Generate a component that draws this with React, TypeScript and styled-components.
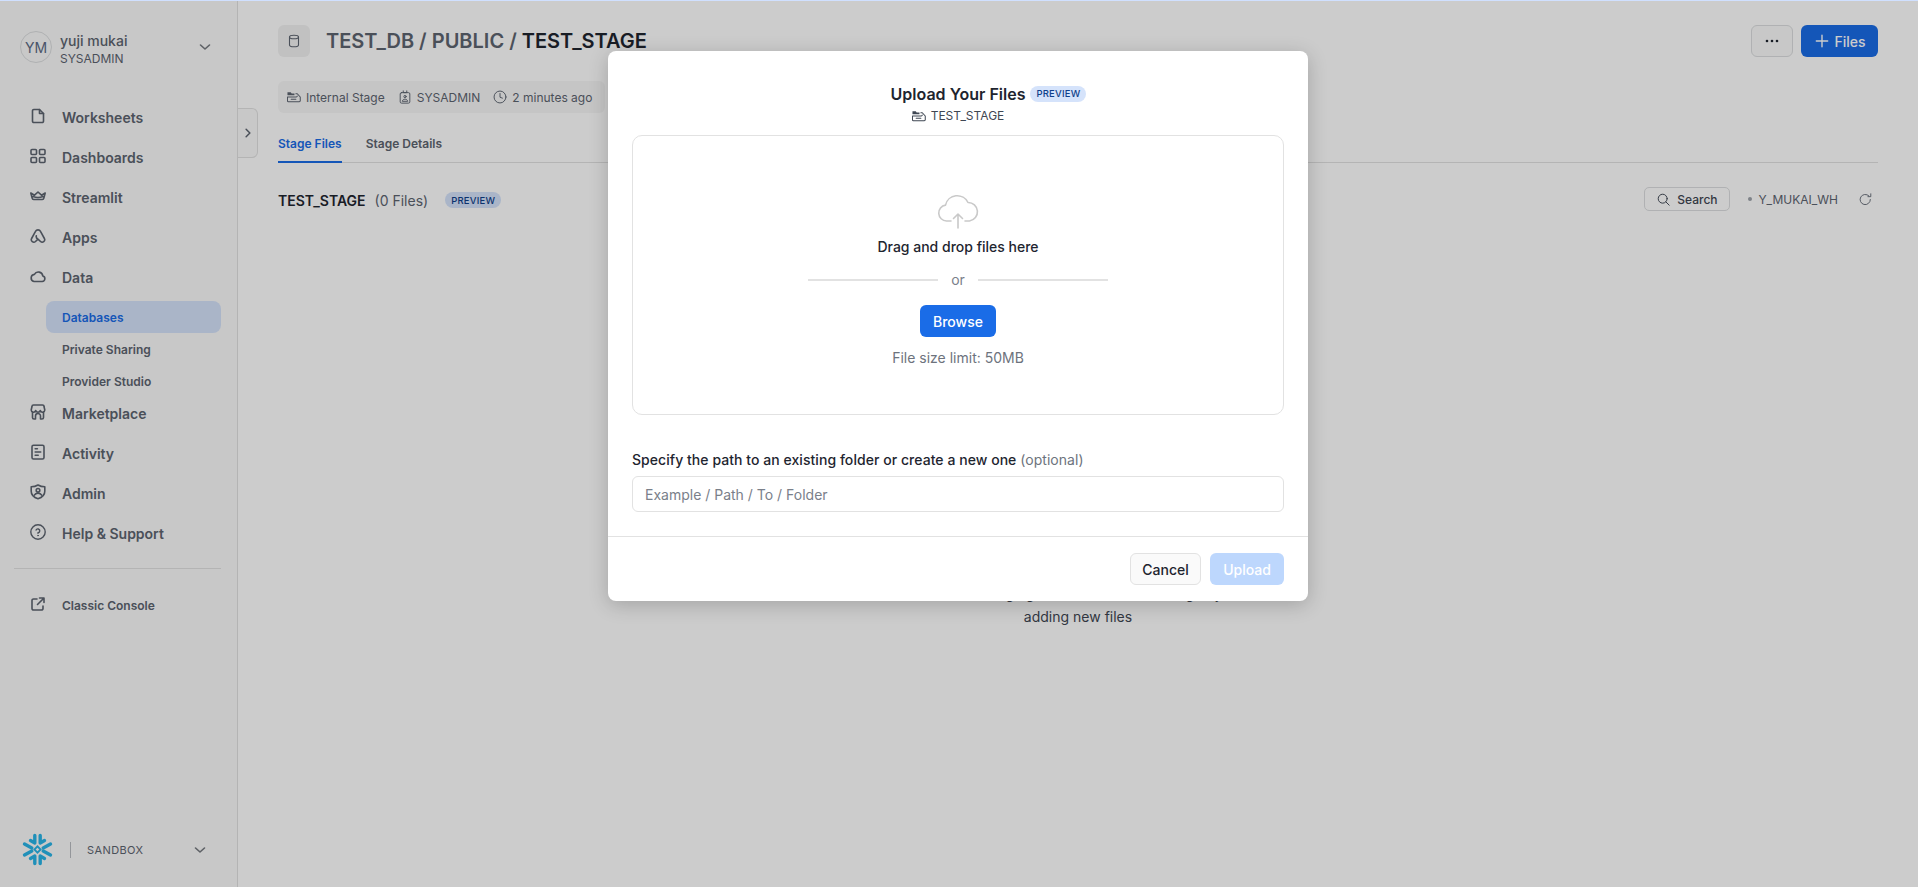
import React from 'react';
import styled, { createGlobalStyle } from 'styled-components';

const GlobalStyle = createGlobalStyle`
  html, body {
    margin: 0;
    padding: 0;
    height: 100%;
    overflow: hidden;
    background: #fff;
    font-family: Inter, "Liberation Sans", sans-serif;
  }
  * { box-sizing: border-box; }
`;

const Page = styled.div`
  position: relative;
  display: flex;
  width: 1918px;
  height: 887px;
  overflow: hidden;
  border-top: 1px solid #d0e0ff;
  color: #1e252f;
`;

const Sidebar = styled.aside`
  display: flex;
  flex-direction: column;
  flex: 0 0 238px;
  height: 100%;
  padding: 0 16px 0 14px;
  background: #fafafa;
  border-right: 1px solid #e2e2e2;
`;

const UserRow = styled.div`
  display: flex;
  align-items: center;
  gap: 8px;
  height: 32px;
  margin: 30px 8px 0 6px;
`;

const Avatar = styled.div`
  display: flex;
  align-items: center;
  justify-content: center;
  flex: 0 0 32px;
  height: 32px;
  border: 1px solid #dcdee0;
  border-radius: 50%;
  font-size: 14px;
  color: #5d6a85;
`;

const UserText = styled.div`
  flex: 1;
  margin-top: 4px;
`;

const UserName = styled.div`
  font-size: 14px;
  font-weight: 500;
  line-height: 17px;
  color: #5d6470;
`;

const UserRole = styled.div`
  font-size: 12px;
  line-height: 16px;
  margin-top: 2px;
  color: #5d6470;
`;

const NavList = styled.nav`
  display: flex;
  flex-direction: column;
  margin-top: 34px;
`;

const NavItem = styled.div`
  display: flex;
  align-items: center;
  gap: 16px;
  height: 40px;
  padding-left: 16px;
  font-size: 14px;
  font-weight: 600;
  color: #5d6470;

  svg {
    margin-top: -2px;
  }
`;

const SubList = styled.div`
  display: flex;
  flex-direction: column;
  padding: 4px 0 0 32px;
  margin-bottom: -4px;
`;

const SubItem = styled.div<{ $active?: boolean }>`
  display: flex;
  align-items: center;
  height: 32px;
  padding-left: 16px;
  border-radius: 8px;
  font-size: 12px;
  font-weight: 600;
  color: ${p => (p.$active ? '#1a6ce7' : '#5d6470')};
  background: ${p => (p.$active ? '#d5e3fb' : 'transparent')};
`;

const Divider = styled.div`
  height: 1px;
  margin: 15px 0 16px;
  background: #e2e2e2;
`;

const ConsoleLink = styled(NavItem)`
  font-size: 12px;
`;

const SidebarFooter = styled.div`
  display: flex;
  align-items: center;
  margin: auto 13px 21px 0;
  padding-left: 8px;
`;

const FooterRule = styled.div`
  width: 1px;
  height: 16px;
  margin: 0 16px;
  background: #b9bcc1;
`;

const FooterLabel = styled.div`
  flex: 1;
  font-size: 11px;
  letter-spacing: 0.4px;
  color: #5d6470;
`;

const Collapse = styled.div`
  position: absolute;
  top: 107px;
  left: 238px;
  display: flex;
  align-items: center;
  justify-content: center;
  width: 20px;
  height: 50px;
  border: 1px solid #e2e2e2;
  border-left: 0;
  border-radius: 0 6px 6px 0;
  background: #fafafa;
  color: #5d6470;
`;

const Main = styled.main`
  display: flex;
  flex-direction: column;
  flex: 1;
  padding: 24px 40px 0;
  min-width: 0;
`;

const HeaderRow = styled.div`
  display: flex;
  align-items: center;
  height: 32px;
`;

const DbIcon = styled.div`
  display: flex;
  align-items: center;
  justify-content: center;
  width: 32px;
  height: 32px;
  margin-right: 16px;
  border-radius: 6px;
  background: #f2f2f2;
  color: #5d6470;
`;

const Crumbs = styled.div`
  flex: 1;
  font-size: 20px;
  font-weight: 600;
  color: #5d6470;
`;

const CrumbLast = styled.span`
  color: #1e252f;
`;

const MoreButton = styled.button`
  display: flex;
  align-items: center;
  justify-content: center;
  width: 42px;
  height: 32px;
  margin-right: 8px;
  padding: 0;
  border: 1px solid #dcdee0;
  border-radius: 6px;
  background: #fafafa;
  color: #1e252f;
`;

const PrimaryButton = styled.button`
  display: flex;
  align-items: center;
  justify-content: center;
  gap: 5px;
  width: 77px;
  height: 32px;
  padding: 0 0 0 2px;
  border: 0;
  border-radius: 6px;
  background: #1a6ce7;
  color: #fff;
  font-family: inherit;
  font-size: 14px;
  font-weight: 500;
`;

const MetaRow = styled.div`
  display: flex;
  align-items: center;
  align-self: flex-start;
  gap: 13px;
  height: 32px;
  margin-top: 24px;
  padding: 0 13px 0 9px;
  border-radius: 6px;
  background: #f7f7f7;
  font-size: 12px;
  color: #5d6470;
`;

const MetaItem = styled.div`
  display: flex;
  align-items: center;
  gap: 5px;
`;

const Tabs = styled.div`
  display: flex;
  gap: 24px;
  margin-top: 15px;
  border-bottom: 1px solid #e2e2e2;
`;

const Tab = styled.div<{ $active?: boolean }>`
  height: 35px;
  padding-top: 7px;
  margin-bottom: -1px;
  font-size: 12px;
  font-weight: 600;
  line-height: 17px;
  color: ${p => (p.$active ? '#1a6ce7' : '#5d6470')};
  border-bottom: 2px solid ${p => (p.$active ? '#1a6ce7' : 'transparent')};
`;

const SectionRow = styled.div`
  display: flex;
  align-items: center;
  height: 24px;
  margin-top: 25px;
`;

const SectionTitle = styled.div`
  font-size: 14px;
  font-weight: 600;
  color: #1e252f;
`;

const SectionCount = styled.div`
  margin-left: 9px;
  font-size: 14px;
  color: #5d6470;
`;

const Badge = styled.span`
  display: inline-flex;
  align-items: center;
  height: 16px;
  padding: 0 6px;
  border-radius: 8px;
  background: #d5e3fb;
  color: #0f3f8a;
  font-size: 9.5px;
  font-weight: 500;
  letter-spacing: 0.2px;
`;

const SectionBadge = styled(Badge)`
  margin-left: 17px;
`;

const TitleBadge = styled(Badge)`
  position: absolute;
  top: 2px;
  left: 100%;
  margin-left: 5px;
`;

const SectionTools = styled.div`
  display: flex;
  align-items: center;
  margin: -2px 0 0 auto;
  padding-right: 6px;
`;

const SearchBox = styled.div`
  display: flex;
  align-items: center;
  justify-content: center;
  gap: 7px;
  width: 86px;
  height: 24px;
  border: 1px solid #dcdee0;
  border-radius: 5px;
  font-size: 12px;
  font-weight: 500;
  color: #3f4753;
`;

const WarehouseDot = styled.span`
  width: 4px;
  height: 4px;
  margin: 0 6px 0 18px;
  border-radius: 50%;
  background: #9ea3ab;
`;

const WarehouseName = styled.div`
  margin-right: 21px;
  font-size: 12px;
  color: #5d6470;
`;

const RefreshIcon = styled.span`
  display: flex;
  color: #5d6470;
`;

const EmptyNote = styled.div`
  width: 340px;
  margin: 370px 0 0 630px;
  font-size: 14px;
  line-height: 23px;
  text-align: center;
  color: #3f4753;
`;

const Overlay = styled.div`
  position: absolute;
  inset: -1px 0 0 0;
  display: flex;
  justify-content: center;
  padding-right: 2px;
  background: rgba(0, 0, 0, 0.2);
`;

const Modal = styled.div`
  display: flex;
  flex-direction: column;
  width: 700px;
  height: 550px;
  margin-top: 51px;
  border-radius: 8px;
  background: #fff;
  box-shadow: 0 4px 20px rgba(0, 0, 0, 0.2);
`;

const ModalHead = styled.div`
  display: flex;
  flex-direction: column;
  align-items: center;
  height: 84px;
  padding-top: 33px;
`;

const ModalTitleRow = styled.div`
  position: relative;
  font-size: 16px;
  font-weight: 600;
  line-height: 20px;
  color: #1e252f;
`;

const ModalSub = styled.div`
  display: flex;
  align-items: center;
  gap: 5px;
  margin-top: 3px;
  font-size: 12px;
  line-height: 17px;
  color: #3f4753;
`;

const DropZone = styled.div`
  display: flex;
  flex-direction: column;
  align-items: center;
  height: 280px;
  margin: 0 24px;
  padding-top: 56px;
  border: 1px solid #e2e2e2;
  border-radius: 10px;
`;

const DropTitle = styled.div`
  margin-top: 8px;
  font-size: 14px;
  font-weight: 500;
  line-height: 20px;
  color: #1e252f;
`;

const OrRow = styled.div`
  display: flex;
  align-items: center;
  gap: 13px;
  width: 300px;
  margin-top: 13px;
  font-size: 14px;
  line-height: 20px;
  color: #7a808a;
`;

const OrLine = styled.div`
  flex: 1;
  height: 2px;
  background: #e2e2e2;
`;

const BrowseButton = styled.button`
  width: 76px;
  height: 32px;
  margin-top: 15px;
  padding: 0;
  border: 0;
  border-radius: 6px;
  background: #1a6ce7;
  color: #fff;
  font-family: inherit;
  font-size: 14px;
  font-weight: 500;
`;

const LimitNote = styled.div`
  margin-top: 11px;
  font-size: 14px;
  line-height: 20px;
  color: #6d737d;
`;

const PathBlock = styled.div`
  display: flex;
  flex-direction: column;
  margin: 35px 24px 0;
`;

const PathLabel = styled.div`
  font-size: 14px;
  font-weight: 500;
  line-height: 20px;
  letter-spacing: 0.05px;
  color: #1e252f;
`;

const Optional = styled.span`
  font-weight: 400;
  color: #6d737d;
`;

const PathInput = styled.input`
  height: 36px;
  margin-top: 6px;
  padding: 0 12px;
  border: 1px solid #e2e2e2;
  border-radius: 6px;
  font-family: inherit;
  font-size: 14px;
  outline: none;

  &::placeholder {
    color: #7a808a;
    opacity: 1;
  }
`;

const ModalFoot = styled.div`
  display: flex;
  align-items: center;
  justify-content: flex-end;
  gap: 9px;
  height: 65px;
  margin-top: auto;
  padding: 0 24px;
  border-top: 1px solid #e2e2e2;
`;

const CancelButton = styled.button`
  width: 71px;
  height: 32px;
  padding: 0;
  border: 1px solid #e2e2e2;
  border-radius: 6px;
  background: #fafafa;
  color: #1e252f;
  font-family: inherit;
  font-size: 14px;
  font-weight: 500;
`;

const UploadButton = styled.button`
  width: 74px;
  height: 32px;
  padding: 0;
  border: 0;
  border-radius: 6px;
  background: #bdd7fd;
  color: #fff;
  font-family: inherit;
  font-size: 14px;
  font-weight: 500;
`;

type IconProps = { size?: number; weight?: number; children: React.ReactNode };

const Icon = ({ size = 16, weight = 1.6, children }: IconProps) => (
  <svg
    width={size}
    height={size}
    viewBox="0 0 16 16"
    fill="none"
    stroke="currentColor"
    strokeWidth={weight}
    strokeLinecap="round"
    strokeLinejoin="round"
    style={{ flex: 'none' }}
  >
    {children}
  </svg>
);

const Chevron = ({ dir = 'down' }: { dir?: 'down' | 'right' }) => (
  <Icon size={dir === 'down' ? 16 : 12}>
    {dir === 'down' ? <path d="M3.5 6l4.500 4 4.500-4" opacity="0.6" /> : <path d="M5.500 3l5 5-5 5" strokeWidth="2" />}
  </Icon>
);

const StageIcon = () => (
  <svg width="14" height="12" viewBox="0 0 15 12" fill="none" style={{ flex: 'none' }}>
    <path d="M.5 .8h3.500l1 1.400H8v2H.5z" fill="currentColor" />
    <path
      d="M9.500 2.500h1.500l3.200 3.500v4a1 1 0 0 1-1 1H1.500a1 1 0 0 1-1-1V6h9.500a1 1 0 0 0 1-1M4.500 8.500h5"
      stroke="currentColor"
      strokeWidth="1.100"
      strokeLinecap="round"
      strokeLinejoin="round"
    />
  </svg>
);

const Snowflake = () => (
  <svg width="32" height="33" viewBox="0 0 32 33" fill="none" stroke="#29b5e8" style={{ flex: 'none' }}>
    <g strokeWidth="3.400" strokeLinecap="round" strokeLinejoin="round">
      <path d="M12.800 2.500v7.500L8.500 7.500" />
      <path d="M18.200 2.500v7.500l4.300-2.500" />
      <path d="M12.800 30.500V23l-4.300 2.500" />
      <path d="M18.200 30.500V23l4.300 2.500" />
      <path d="M2.500 11l7.300 4" />
      <path d="M2.500 22l7.300-4" />
      <path d="M28.500 11l-7.300 4" />
      <path d="M28.500 22l-7.300-4" />
    </g>
    <rect x="13.300" y="14.300" width="4.400" height="4.400" transform="rotate(45 15.500 16.500)" strokeWidth="1.800" />
  </svg>
);

const navTop = [
  {
    label: 'Worksheets',
    icon: <><path d="M9.500 1.500H3.800a1.300 1.300 0 0 0-1.300 1.300v10.400a1.300 1.300 0 0 0 1.300 1.300h8.400a1.300 1.300 0 0 0 1.300-1.300V5.500z" /><path d="M9.500 1.500v4h4" /></>,
  },
  {
    label: 'Dashboards',
    icon: <><rect x="1" y="1.500" width="5.500" height="5" rx="1" /><rect x="9.500" y="1.500" width="5.500" height="5" rx="1" /><rect x="1" y="9.500" width="5.500" height="5" rx="1" /><rect x="9.500" y="9.500" width="5.500" height="5" rx="1" /></>,
  },
  {
    label: 'Streamlit',
    icon: <path d="M.8 5l3.700 2.200L8 4l3.500 3.200L15.200 5l-1.400 5.200a1.500 1.500 0 0 1-1.500 1.300H3.700a1.500 1.500 0 0 1-1.500-1.300zM3 8.500c3 1.200 7 1.200 10 0" />,
  },
  {
    label: 'Apps',
    icon: <path d="M5.500 3.400L1.600 10.500a2.500 2.500 0 0 0 3.900 3L8 11.200l2.500 2.300a2.500 2.500 0 0 0 3.900-3L10.500 3.400a2.800 2.800 0 0 0-5 0zM8 11.200a3 3 0 0 1-1.700-3.400" />,
  },
  {
    label: 'Data',
    icon: <path d="M4 13.500h8.200a2.800 2.800 0 0 0 .6-5.500A4.500 4.500 0 0 0 4.400 6.400 3.600 3.600 0 0 0 4 13.500z" />,
  },
];

const navBottom = [
  {
    label: 'Marketplace',
    icon: <><path d="M3.500 1h9A1.500 1.500 0 0 1 14 2.500l.8 3.500a2.300 2.300 0 0 1-4.500.6 2.400 2.400 0 0 1-4.600 0A2.300 2.300 0 0 1 1.200 6L2 2.500A1.500 1.500 0 0 1 3.500 1z" /><path d="M2.500 8v5.500A1.500 1.500 0 0 0 4 15h1.500v-3a2.500 2.500 0 0 1 5 0v3H12a1.500 1.500 0 0 0 1.500-1.500V8" /></>,
  },
  {
    label: 'Activity',
    icon: <><rect x="2" y="1.200" width="12" height="13.800" rx="1.500" /><path d="M5.200 4.800h2.200M5.200 8h5.500M5.200 11.200h3" /></>,
  },
  {
    label: 'Admin',
    icon: <><path d="M8 1c2 1.200 4.200 1.800 6.800 1.800v4.500c0 3.700-2.800 6.300-6.800 7.500-4-1.200-6.800-3.800-6.800-7.500V2.800C3.800 2.800 6 2.200 8 1z" /><circle cx="8" cy="6.300" r="1.800" /><path d="M4.300 11.200c.8-1.500 2.100-2.100 3.700-2.100s2.900.6 3.700 2.100" /></>,
  },
  {
    label: 'Help & Support',
    icon: <><circle cx="8" cy="8" r="7.200" strokeWidth="1.400" /><path d="M6.100 6.100A1.900 1.900 0 1 1 8 8.700v.6" strokeWidth="1.400" /><circle cx="8" cy="11.600" r=".4" strokeWidth="1" /></>,
  },
];

const App = () => {
  return (
    <>
      <GlobalStyle />
      <Page>
        <Sidebar>
          <UserRow>
            <Avatar>YM</Avatar>
            <UserText>
              <UserName>yuji mukai</UserName>
              <UserRole>SYSADMIN</UserRole>
            </UserText>
            <Chevron />
          </UserRow>
          <NavList>
            {navTop.map(item => (
              <NavItem key={item.label}>
                <Icon>{item.icon}</Icon>
                {item.label}
              </NavItem>
            ))}
            <SubList>
              <SubItem $active>Databases</SubItem>
              <SubItem>Private Sharing</SubItem>
              <SubItem>Provider Studio</SubItem>
            </SubList>
            {navBottom.map(item => (
              <NavItem key={item.label}>
                <Icon>{item.icon}</Icon>
                {item.label}
              </NavItem>
            ))}
          </NavList>
          <Divider />
          <ConsoleLink>
            <Icon>
              <path d="M7 3H3.500A1.500 1.500 0 0 0 2 4.500v8A1.500 1.500 0 0 0 3.500 14h8a1.500 1.500 0 0 0 1.500-1.500V10" />
              <path d="M7.500 8.500L13.500 2.500M9.500 2h4.500v4.500" />
            </Icon>
            Classic Console
          </ConsoleLink>
          <SidebarFooter>
            <Snowflake />
            <FooterRule />
            <FooterLabel>SANDBOX</FooterLabel>
            <Chevron />
          </SidebarFooter>
        </Sidebar>
        <Collapse>
          <Chevron dir="right" />
        </Collapse>
        <Main>
          <HeaderRow>
            <DbIcon>
              <Icon weight={1.1}>
                <ellipse cx="8" cy="4" rx="4.500" ry="1.800" />
                <path d="M3.500 4v8c0 1 2 1.800 4.500 1.800s4.500-.8 4.500-1.800V4" />
              </Icon>
            </DbIcon>
            <Crumbs>
              TEST_DB / PUBLIC / <CrumbLast>TEST_STAGE</CrumbLast>
            </Crumbs>
            <MoreButton>
              <svg width="14" height="4" viewBox="0 0 14 4" fill="currentColor">
                <circle cx="2" cy="2" r="1.300" />
                <circle cx="7" cy="2" r="1.300" />
                <circle cx="12" cy="2" r="1.300" />
              </svg>
            </MoreButton>
            <PrimaryButton>
              <Icon size={14}>
                <path d="M8 1.500v13M1.500 8h13" />
              </Icon>
              Files
            </PrimaryButton>
          </HeaderRow>
          <MetaRow>
            <MetaItem>
              <StageIcon />
              Internal Stage
            </MetaItem>
            <MetaItem>
              <Icon size={14} weight={1.1}>
                <rect x="2.500" y="3" width="11" height="12" rx="1.500" />
                <path d="M6 1v2h4V1" />
                <circle cx="8" cy="7.500" r="1.300" />
                <path d="M5 12.500c.5-1.500 1.500-2 3-2s2.500.5 3 2z" />
              </Icon>
              SYSADMIN
            </MetaItem>
            <MetaItem>
              <Icon size={14} weight={1.1}>
                <circle cx="8" cy="8" r="6.800" />
                <path d="M8 4v4.300l2.800 1" />
              </Icon>
              2 minutes ago
            </MetaItem>
          </MetaRow>
          <Tabs>
            <Tab $active>Stage Files</Tab>
            <Tab>Stage Details</Tab>
          </Tabs>
          <SectionRow>
            <SectionTitle>TEST_STAGE</SectionTitle>
            <SectionCount>(0 Files)</SectionCount>
            <SectionBadge>PREVIEW</SectionBadge>
            <SectionTools>
              <SearchBox>
                <Icon size={13} weight={1.2}>
                  <circle cx="7" cy="7" r="5.500" />
                  <path d="M11 11l4 4" />
                </Icon>
                Search
              </SearchBox>
              <WarehouseDot />
              <WarehouseName>Y_MUKAI_WH</WarehouseName>
              <RefreshIcon>
                <Icon size={13} weight={1.1}>
                  <path d="M14 8a6.300 6.300 0 1 1-1.900-4.500" />
                  <path d="M14.500 1v3.500H11" />
                </Icon>
              </RefreshIcon>
            </SectionTools>
          </SectionRow>
          <EmptyNote>
            Start managing the files within this stage by
            <br />
            adding new files
          </EmptyNote>
        </Main>
        <Overlay>
          <Modal>
            <ModalHead>
              <ModalTitleRow>
                Upload Your Files
                <TitleBadge>PREVIEW</TitleBadge>
              </ModalTitleRow>
              <ModalSub>
                <StageIcon />
                TEST_STAGE
              </ModalSub>
            </ModalHead>
            <DropZone>
              <svg width="42" height="37" viewBox="0 0 42 37" fill="none" stroke="#c9c9c9" strokeWidth="1.600" strokeLinecap="round" strokeLinejoin="round">
                <path d="M14 29H9.500a8 8 0 0 1-1-15.900A12 12 0 0 1 31 10.500a9.300 9.300 0 0 1 1.500 18.500H28" />
                <path d="M21 36V22M16.500 26.500L21 22l4.500 4.500" />
              </svg>
              <DropTitle>Drag and drop files here</DropTitle>
              <OrRow>
                <OrLine />
                or
                <OrLine />
              </OrRow>
              <BrowseButton>Browse</BrowseButton>
              <LimitNote>File size limit: 50MB</LimitNote>
            </DropZone>
            <PathBlock>
              <PathLabel>
                Specify the path to an existing folder or create a new one <Optional>(optional)</Optional>
              </PathLabel>
              <PathInput placeholder="Example / Path / To / Folder" readOnly />
            </PathBlock>
            <ModalFoot>
              <CancelButton>Cancel</CancelButton>
              <UploadButton>Upload</UploadButton>
            </ModalFoot>
          </Modal>
        </Overlay>
      </Page>
    </>
  );
};

export default App;
